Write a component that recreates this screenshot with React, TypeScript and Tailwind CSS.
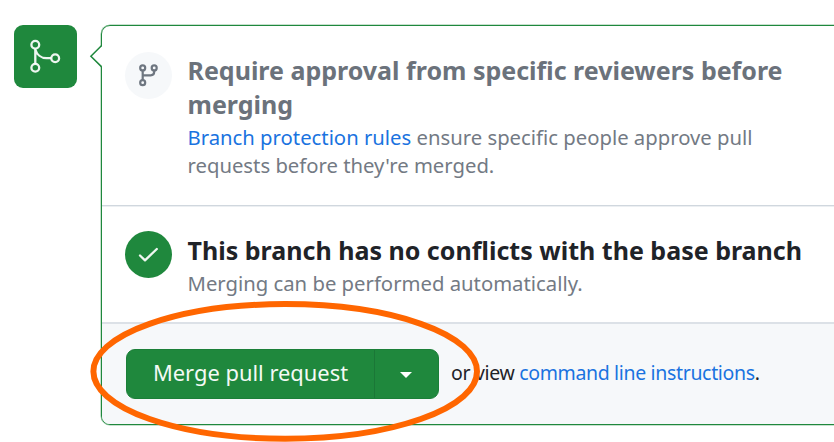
import React from "react";

function MergeBadge() {
  return (
    <div className="ml-[14px] mt-[25px] h-[62.5px] w-[62.5px] shrink-0 rounded-[9px] bg-[#1f883d]">
      <svg width="62" height="62" viewBox="14 25 62 62" fill="none" stroke="#fff" strokeOpacity="0.92" strokeWidth="2.3">
        <circle cx="35.3" cy="44.8" r="3.9" />
        <circle cx="35.3" cy="67.8" r="3.9" />
        <circle cx="55.2" cy="58.2" r="3.9" />
        <path d="M35.3 48.7V63.9M35.3 49.5C36.8 54.5 41 58.2 46.5 58.2H51.3" />
      </svg>
    </div>
  );
}

function BranchIcon() {
  return (
    <div className="h-[47px] w-[47px] shrink-0 rounded-full bg-[#f6f8fa]">
      <svg width="47" height="47" viewBox="125 51.5 47 47" fill="none" stroke="#6e7680" strokeWidth="2.2">
        <circle cx="142.7" cy="67.4" r="2.5" />
        <circle cx="154.2" cy="67.4" r="2.5" />
        <circle cx="142.7" cy="82.2" r="2.5" />
        <path d="M142.7 70V79.6M142.7 74.8H150.7Q154.2 74.8 154.2 71.3V70" />
      </svg>
    </div>
  );
}

function CheckIcon() {
  return (
    <div className="h-[47px] w-[47px] shrink-0 rounded-full bg-[#1f883d]">
      <svg width="47" height="47" viewBox="125 231.5 47 47" fill="none" stroke="#fff" strokeOpacity="0.93" strokeWidth="2.3" strokeLinecap="round" strokeLinejoin="round">
        <path d="M140 256L145 260.8L156.8 249.5" />
      </svg>
    </div>
  );
}

export default function App() {
  return (
    <div className="relative flex h-[442px] w-[834px] overflow-hidden bg-white font-['Noto_Sans',sans-serif] text-[#1f2328]">
      <MergeBadge />
      <main className="-mr-3 ml-[24.5px] mt-[25px] flex h-[400px] grow flex-col rounded-[9px] border border-[#1f883d] shadow-[0_0_0_0.5px_#8fc49e]">
        <section className="flex h-[180px] shrink-0 border-b border-[#d0d7de] pl-[23px] pt-[25.5px] shadow-[0_1px_0_#eceff2]">
          <BranchIcon />
          <div className="ml-[15.5px] whitespace-nowrap">
            <h3 className="mt-[1.5px] text-[25px] font-bold leading-[34px] text-[#6b727b]">
              Require approval from specific reviewers before
              <br />
              merging
            </h3>
            <p className="mt-[1.5px] text-[20.3px] leading-[28.2px] text-[#737a84]">
              <a className="text-[#1a73e0]">Branch protection rules</a> ensure specific people approve pull
              <br />
              requests before they're merged.
            </p>
          </div>
        </section>
        <section className="flex h-[118px] shrink-0 border-b-2 border-[#dce1e7] pl-[23px] pt-[25px]">
          <CheckIcon />
          <div className="ml-[15.5px] whitespace-nowrap">
            <h3 className="mt-[2px] text-[25.03px] font-bold leading-[34px]">
              This branch has no conflicts with the base branch
            </h3>
            <p className="mt-[2px] text-[20.3px] leading-[28px] text-[#737a84]">Merging can be performed automatically.</p>
          </div>
        </section>
        <footer className="flex grow items-center rounded-bl-[8px] bg-[#f6f8fa] pl-[24px]">
          <div className="flex h-[50px] w-[313px] shrink-0 overflow-hidden rounded-[9px] border border-[#1b7f38] bg-[#1f883d]">
            <button className="w-[248px] border-r border-[#1b7737] pb-[1px] text-[21.9px] text-[#f4faf5]">Merge pull request</button>
            <button className="flex grow items-center justify-center pr-[1px] pt-[2px]">
              <svg width="14" height="8" viewBox="0 0 14 8" fill="#fff">
                <path d="M1 1H13L7 7Z" />
              </svg>
            </button>
          </div>
          <p className="ml-3 whitespace-nowrap pb-[2px] text-[19.5px] leading-[28px] tracking-[-0.34px]">
            or view <a className="text-[#1a73e0]">command line instructions</a>.
          </p>
        </footer>
      </main>
      <svg className="absolute left-[88px] top-[44px]" width="15" height="26" viewBox="88 44 15 26">
        <path d="M102 46L91 56.2L102 66.4Z" fill="#fff" />
        <path d="M101.4 45.8L90.9 56.2L101.4 66.6" fill="none" stroke="#1f883d" strokeWidth="1.5" />
      </svg>
      <svg className="absolute left-0 top-0" width="834" height="442" fill="none">
        <ellipse cx="285.2" cy="371.4" rx="191.8" ry="67.3" stroke="#ff6600" strokeWidth="6" />
      </svg>
    </div>
  );
}
